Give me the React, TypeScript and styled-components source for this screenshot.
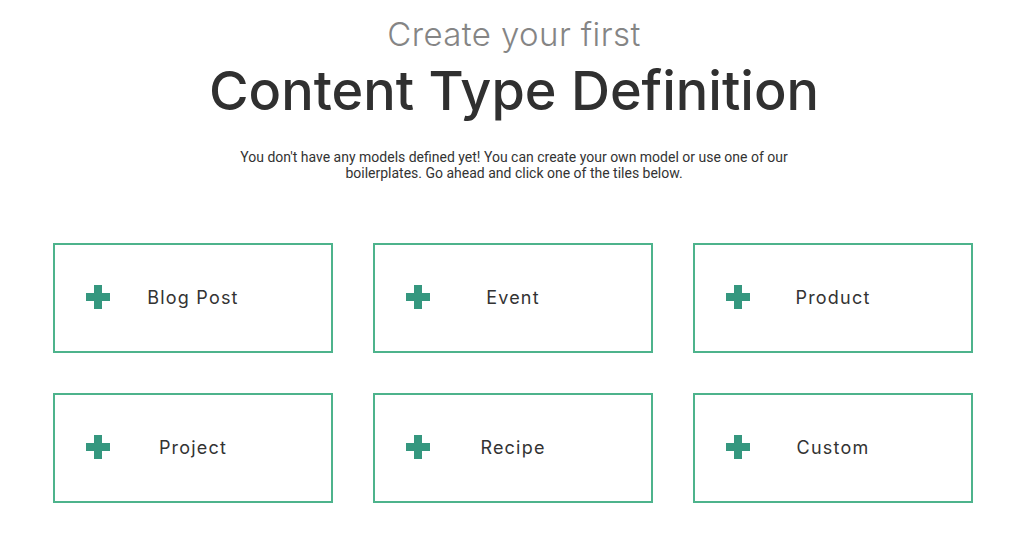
import React from "react";
import styled, { createGlobalStyle } from "styled-components";

const GlobalStyle = createGlobalStyle`
  html, body { margin: 0; padding: 0; background: #ffffff; }
  * { box-sizing: border-box; }
`;

const Page = styled.div`
  width: 1028px;
  display: flex;
  flex-direction: column;
  align-items: center;
  padding-top: 13px;
`;

const Kicker = styled.div`
  font-family: Inter, sans-serif;
  font-weight: 300;
  font-size: 33px;
  line-height: 42px;
  color: #858585;
  letter-spacing: 0.4px;
`;

const Title = styled.h1`
  margin: 0;
  font-family: Inter, sans-serif;
  font-weight: 500;
  font-size: 54px;
  line-height: 72px;
  color: #303030;
  letter-spacing: 0;
`;

const Intro = styled.p`
  margin: 22px 0 0;
  max-width: 560px;
  text-align: center;
  font-family: Roboto, sans-serif;
  font-size: 14px;
  line-height: 16px;
  color: #333333;
`;

const Grid = styled.div`
  margin-top: 62px;
  margin-left: -2px;
  display: grid;
  grid-template-columns: repeat(3, 280px);
  column-gap: 40px;
  row-gap: 40px;
`;

const Tile = styled.button`
  position: relative;
  width: 280px;
  height: 110px;
  border: 2px solid #4db38c;
  background: #ffffff;
  display: flex;
  align-items: center;
  justify-content: center;
  cursor: pointer;
  padding: 0 0 1px;
`;

const PlusIcon = styled.svg`
  position: absolute;
  left: 31px;
  top: 40px;
  width: 24px;
  height: 24px;
`;

const TileLabel = styled.span`
  font-family: Inter, sans-serif;
  font-size: 18px;
  font-weight: 400;
  letter-spacing: 1.2px;
  color: #333333;
`;

const tiles = ["Blog Post", "Event", "Product", "Project", "Recipe", "Custom"];

export default function App() {
  return (
    <>
      <GlobalStyle />
      <Page>
        <Kicker>Create your first</Kicker>
        <Title>Content Type Definition</Title>
        <Intro>
          You don't have any models defined yet! You can create your own model or use one of our
          boilerplates. Go ahead and click one of the tiles below.
        </Intro>
        <Grid>
          {tiles.map((t) => (
            <Tile key={t}>
              <PlusIcon viewBox="0 0 24 24">
                <rect x="8" y="0" width="8" height="24" fill="#35977f" />
                <rect x="0" y="8" width="24" height="8" fill="#35977f" />
              </PlusIcon>
              <TileLabel>{t}</TileLabel>
            </Tile>
          ))}
        </Grid>
      </Page>
    </>
  );
}
